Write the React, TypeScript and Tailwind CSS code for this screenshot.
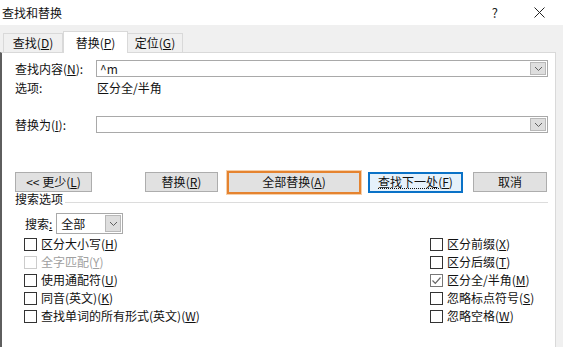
import type { ReactNode } from "react"

const FONT = "font-['Noto_Sans_CJK_SC','Noto_Sans',sans-serif]"

function Chevron() {
  return (
    <svg width="9" height="6" viewBox="0 0 9 6" fill="none">
      <path d="M1 1l3.5 3.5L8 1" stroke="#606060" strokeWidth="1" />
    </svg>
  )
}

function ComboInput({ value, width }: { value?: string; width: string }) {
  return (
    <div className={`flex h-[17px] ${width} items-stretch border border-[#a9a9a9] bg-white`}>
      <div className="flex flex-1 items-center pl-[3px] text-[12px] leading-none text-[#1a1a1a]">{value}</div>
      <div className="my-px mr-px flex w-[16px] items-center justify-center border border-[#b8b8b8] bg-[#dedede]">
        <Chevron />
      </div>
    </div>
  )
}

function Btn({
  children,
  className = "",
}: {
  children: ReactNode
  className?: string
}) {
  return (
    <div
      className={`flex h-[20px] items-center justify-center border border-[#adadad] bg-[#e1e1e1] text-[12px] leading-none text-[#111] ${className}`}
    >
      {children}
    </div>
  )
}

function Check({
  label,
  checked,
  disabled,
}: {
  label: ReactNode
  checked?: boolean
  disabled?: boolean
}) {
  return (
    <div className="flex h-[18px] items-center">
      <div
        className={`flex h-[13px] w-[13px] items-center justify-center border bg-white ${
          disabled ? "border-[#cccccc]" : checked ? "border-[#777]" : "border-[#333]"
        }`}
      >
        {checked && (
          <svg width="11" height="11" viewBox="0 0 11 11" fill="none">
            <path d="M1.5 5.5l2.8 2.8L9.5 2.5" stroke="#666" strokeWidth="1.2" />
          </svg>
        )}
      </div>
      <span
        className={`ml-[4px] text-[12px] leading-none ${disabled ? "text-[#a0a0a0]" : "text-[#111]"}`}
      >
        {label}
      </span>
    </div>
  )
}

const M = ({ k }: { k: string }) => (
  <>
    (<u>{k}</u>)
  </>
)

export default function App() {
  return (
    <div className={`h-[347px] w-[563px] overflow-hidden bg-[#f0f0f0] ${FONT}`}>
      {/* title bar */}
      <div className="flex h-[25px] items-center bg-white pl-[2px]">
        <span className="text-[12px] leading-none text-[#111]">查找和替换</span>
        <span className="ml-auto text-[13px] leading-none text-[#222]">?</span>
        <svg className="ml-[36px] mr-[18px]" width="11" height="11" viewBox="0 0 11 11">
          <path d="M0.5 0.5l10 10M10.5 0.5l-10 10" stroke="#222" strokeWidth="1" />
        </svg>
      </div>

      {/* tabs */}
      <div className="flex h-[27px] items-end pl-[3px]">
        <div className="flex h-[19px] w-[60px] items-center justify-center border border-b-0 border-[#d9d9d9] text-[12px] leading-none text-[#111]">
          查找<M k="D" />
        </div>
        <div className="relative top-px z-10 flex h-[22px] w-[65px] items-center justify-center border border-b-0 border-[#d9d9d9] bg-white text-[12px] leading-none text-[#111]">
          替换<M k="P" />
        </div>
        <div className="flex h-[19px] w-[55px] items-center justify-center border border-b-0 border-l-0 border-[#d9d9d9] text-[12px] leading-none text-[#111]">
          定位<M k="G" />
        </div>
      </div>

      {/* panel */}
      <div className="h-[300px] w-[556px] border border-l-2 border-[#d9d9d9] border-l-[#5e5e5e] bg-white pl-[13px] pr-[7px]">
        <div className="mt-[7px] flex items-center">
          <span className="w-[81px] text-[12px] leading-none text-[#111]">
            查找内容<M k="N" />:
          </span>
          <ComboInput value="^m" width="w-[452px]" />
        </div>
        <div className="mt-[4px] flex h-[14px] items-center text-[12px] leading-none text-[#111]">
          <span className="w-[82px]">选项:</span>
          <span>区分全/半角</span>
        </div>
        <div className="mt-[21px] flex items-center">
          <span className="w-[81px] text-[12px] leading-none text-[#111]">
            替换为<M k="I" />:
          </span>
          <ComboInput width="w-[452px]" />
        </div>

        {/* buttons */}
        <div className="mt-[38px] flex h-[22px] items-center">
          <Btn className="w-[77px]">
            &lt;&lt; 更少<M k="L" />
          </Btn>
          <Btn className="ml-[53px] w-[73px]">
            替换<M k="R" />
          </Btn>
          <div className="ml-[9px] flex h-[23px] w-[134px] items-center justify-center border-2 border-[#e5832f] bg-[#e1e1e1] text-[12px] leading-none text-[#111] shadow-[0_0_0_1px_#f6cfa9]">
            全部替换<M k="A" />
          </div>
          <div className="ml-[7px] flex h-[21px] w-[95px] items-center justify-center border-2 border-[#0a72c7] bg-[#e5f1fb] text-[12px] leading-none text-[#111]">
            <span className="underline decoration-dotted">
              查找下一处<M k="F" />
            </span>
          </div>
          <Btn className="ml-[10px] w-[74px]">取消</Btn>
        </div>

        {/* group header */}
        <div className="flex h-[12px] items-center">
          <span className="text-[12px] leading-none text-[#111]">搜索选项</span>
          <div className="ml-[2px] mt-[6px] h-px flex-1 bg-[#dcdcdc]" />
        </div>

        <div className="mt-[8px] flex items-center pl-[10px]">
          <span className="text-[12px] leading-none text-[#111]">
            搜索<u>:</u>
          </span>
          <div className="ml-[4px] flex h-[21px] w-[67px] items-stretch border border-[#a9a9a9] bg-white">
            <div className="flex flex-1 items-center pl-[4px] text-[12px] leading-none text-[#111]">全部</div>
            <div className="my-px mr-px flex w-[16px] items-center justify-center border border-[#b8b8b8] bg-[#dedede]">
              <Chevron />
            </div>
          </div>
        </div>

        <div className="mt-px flex pl-[9px]">
          <div className="flex w-[406px] flex-col">
            <Check label={<>区分大小写<M k="H" /></>} />
            <Check label={<>全字匹配<M k="Y" /></>} disabled />
            <Check label={<>使用通配符<M k="U" /></>} />
            <Check label={<>同音(英文)<M k="K" /></>} />
            <Check label={<>查找单词的所有形式(英文)<M k="W" /></>} />
          </div>
          <div className="flex flex-col">
            <Check label={<>区分前缀<M k="X" /></>} />
            <Check label={<>区分后缀<M k="T" /></>} />
            <Check label={<>区分全/半角<M k="M" /></>} checked />
            <Check label={<>忽略标点符号<M k="S" /></>} />
            <Check label={<>忽略空格<M k="W" /></>} />
          </div>
        </div>
      </div>
    </div>
  )
}
